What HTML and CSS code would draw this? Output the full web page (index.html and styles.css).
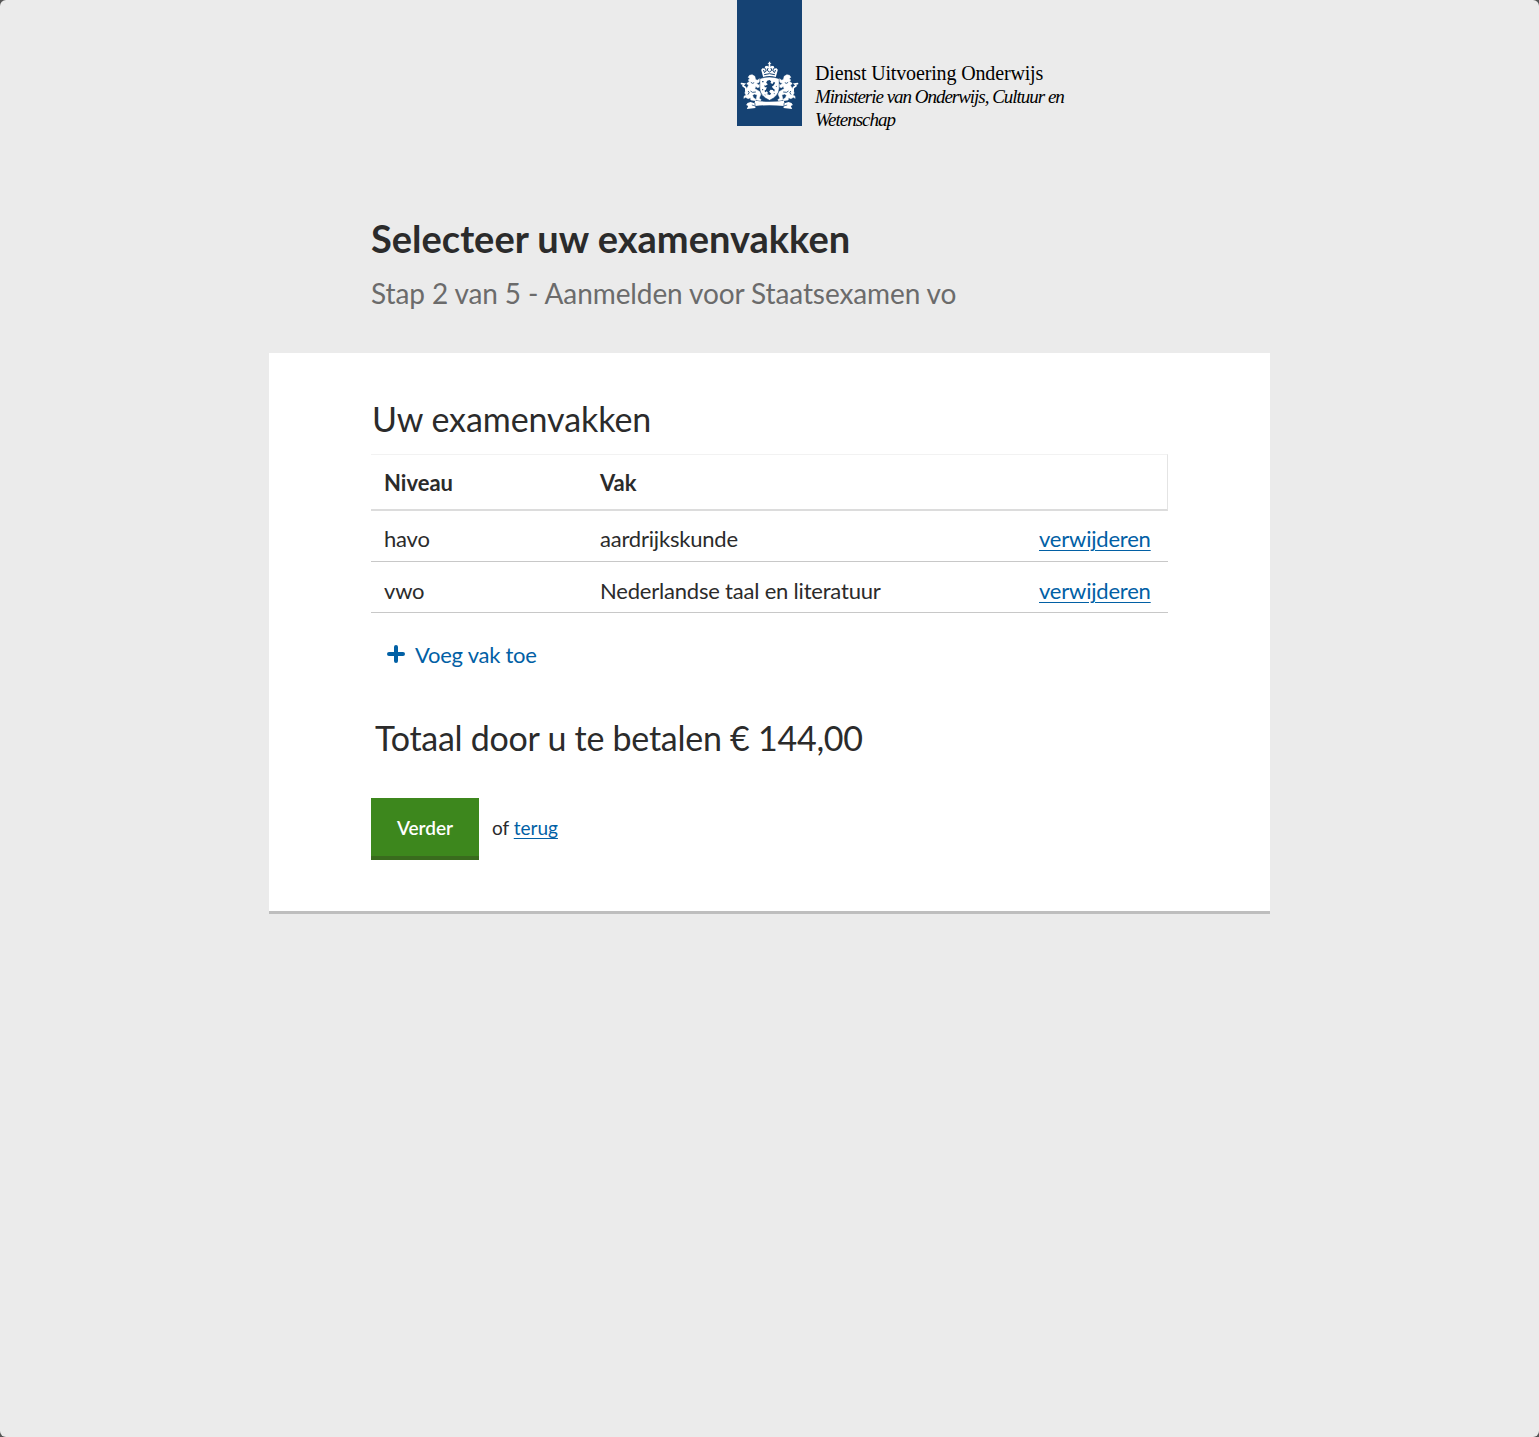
FILE: index.html
```html
<!DOCTYPE html>
<html lang="nl">
<head>
<meta charset="utf-8">
<title>Selecteer uw examenvakken</title>
<link rel="stylesheet" href="styles.css">
</head>
<body>
<div class="page">
  <header class="header">
    <svg class="emblem" viewBox="21 -150 195 378" aria-hidden="true">
      <rect x="21" y="-150" width="195" height="378" fill="#154273"/>
      <defs>
        <g id="lion">
          <path fill="#fff" stroke="#fff" stroke-width="1.5" stroke-linejoin="round" d="M57 82L61 76L69 74L77 79L79 88L84 91L91 86L94 91L88 98L82 99L88 105L92 103V111L84 113L80 109L77 116L84 120L92 125L95 133L90 145L96 149L94 152L81 150L82 143L84 135L76 132L70 136L73 143L80 148L79 152L65 150L64 143L57 146L49 142L44 145L45 138L51 136L47 129L50 121L52 116L57 108L59 102L56 98L61 94L57 90L62 86Z"/>
          <path fill="none" stroke="#154273" stroke-width="2.5" d="M65 97L70 100L75 98M57 123L60 128L56 134M64 123L70 127L80 126"/>
          <path fill="none" stroke="#fff" stroke-width="5" stroke-linecap="round" d="M50 123Q52 112 45 110T45 102L37 101M65 104L55 101"/>
        </g>
      </defs>
      <g transform="translate(-2.5 0)">
        <use href="#lion"/>
        <use href="#lion" transform="matrix(-1 0 0 1 242 0)"/>
        <path fill="#fff" stroke="#154273" stroke-width="1.5" d="M92 86Q121 76 150 86V116Q149 138 121 151Q93 138 92 116Z"/>
        <path fill="#154273" d="M114 92L121 90L126 94L124 99L130 102L134 95L138 98L134 106L128 110L133 116L137 119L135 125L131 120L124 119L120 125L126 131L122 135L112 132L117 130L113 124L108 127L106 122L110 119L113 112L107 112L105 106L109 107L116 103L111 98Z"/>
        <path fill="#154273" d="M99 93H103V97H99ZM139 109L143 107V111ZM99 117H102V121H99ZM106 132L109 134L108 137ZM133 131L137 129L136 133Z"/>
        <path fill="#fff" d="M102 81L98 67L96 59L101 54L106 57L108 49L114 47L118 50L119 43L115 41L119 39V35H123V39L127 41L123 43L124 50L128 47L134 49L136 57L141 54L146 59L144 67L140 81Q121 75 102 81Z"/>
        <path fill="none" stroke="#154273" stroke-width="3" d="M103 60L106 68L111 63L109 55M117 54L114 61L121 66L128 61L125 54M133 55L131 63L136 68L139 60M105 74Q121 68 137 74"/>
        <path fill="#fff" d="M78 152Q121 158 164 152L166 160L178 156L187 159L191 165L185 168L189 177L163 174L164 168Q121 163 78 168L79 174L53 177L57 168L51 165L55 159L64 156L76 160Z"/>
        <path fill="none" stroke="#154273" stroke-width="2" d="M77 159L78 168L68 165M165 159L164 168L174 165"/>
      </g>
    </svg>
    <p class="sender">Dienst Uitvoering Onderwijs<br><em>Ministerie van Onderwijs, Cultuur en<br>Wetenschap</em></p>
  </header>
  <div class="intro">
    <h1>Selecteer uw examenvakken</h1>
    <p class="step">Stap 2 van 5 - Aanmelden voor Staatsexamen vo</p>
  </div>
  <main class="card">
    <h2 class="subjects">Uw examenvakken</h2>
    <table>
      <thead><tr><th class="level">Niveau</th><th class="subject">Vak</th><th></th></tr></thead>
      <tbody>
        <tr><td>havo</td><td>aardrijkskunde</td><td><a href="#">verwijderen</a></td></tr>
        <tr><td>vwo</td><td>Nederlandse taal en literatuur</td><td><a href="#">verwijderen</a></td></tr>
      </tbody>
    </table>
    <a class="add" href="#">
      <svg width="18" height="18" viewBox="0 0 18 18" aria-hidden="true"><path d="M9 2V16M2 9H16" stroke-width="4" stroke-linecap="round"/></svg>
      <span>Voeg vak toe</span>
    </a>
    <h2 class="total">Totaal door u te betalen € 144,00</h2>
    <div class="actions">
      <button type="button">Verder</button>
      <span>of <a href="#">terug</a></span>
    </div>
  </main>
</div>
</body>
</html>
```
FILE: styles.css
```css
* { box-sizing: border-box; }
html { background: #555; }
body {
  margin: 0;
  color: #2b2b2b;
  font-family: Lato, "Liberation Sans", sans-serif;
  font-size: 22px;
}
h1, h2, p { margin: 0; }
a { color: #0160a5; text-decoration-thickness: 1px; text-underline-offset: 2.5px; }

.page {
  min-height: 1437px;
  background: #ebebeb;
  border-radius: 6px;
}
.header {
  display: flex;
  align-items: flex-start;
  gap: 13px;
  height: 215px;
  padding-left: 737px;
}
.emblem { width: 65px; height: 126px; flex: none; }
.sender {
  padding-top: 62px;
  color: #000;
  font: 20px/23px "Liberation Serif", serif;
  letter-spacing: -0.15px;
  white-space: nowrap;
}
.sender em { font-size: 19px; letter-spacing: -1.02px; }

.intro { padding-left: 371px; }
h1 { font-size: 38px; line-height: 46px; font-weight: 700; }
.step {
  margin-top: 15px;
  color: #6b6b6b;
  font-size: 28px;
  line-height: 34px;
  letter-spacing: -0.1px;
}

.card {
  width: 1001px;
  margin: 43px 0 0 269px;
  padding: 46px 102px 51px;
  background: #fff;
  border-bottom: 3px solid #bebebe;
}
h2 { font-size: 34px; line-height: 40px; font-weight: 400; }
.subjects { padding-left: 1px; letter-spacing: -0.07px; }

table {
  width: 797px;
  margin-top: 15px;
  table-layout: fixed;
  border-collapse: separate;
  border-spacing: 0;
  line-height: 28px;
}
th, td { text-align: left; padding-left: 13px; white-space: nowrap; }
th {
  height: 57px;
  padding-top: 2px;
  padding-bottom: 0;
  border-top: 1px solid #f2f2f2;
  border-bottom: 2px solid #dcdcdc;
}
th:last-child { border-right: 1px solid #e4e4e4; }
td {
  height: 51px;
  padding-top: 14px;
  padding-bottom: 8px;
  border-bottom: 1px solid #c8c8c8;
  letter-spacing: -0.2px;
}
tr:last-child td { padding-top: 15px; padding-bottom: 7px; }
.level { width: 216px; }
.subject { width: 439px; }

.add {
  display: flex;
  align-items: center;
  gap: 10px;
  margin: 28px 0 0 16px;
  line-height: 28px;
  letter-spacing: -0.25px;
  text-decoration: none;
}
.add svg { margin-top: -2px; }
.add path { stroke: currentColor; }
.total { margin: 49px 0 0 4px; letter-spacing: -0.26px; }

.actions {
  display: flex;
  align-items: center;
  gap: 13px;
  margin-top: 40px;
  font-size: 19px;
}
.actions span { padding-bottom: 3px; }
button {
  width: 108px;
  height: 62px;
  padding: 0;
  border: 0;
  border-bottom: 4px solid #396b1d;
  background: #3d871d;
  color: #fff;
  font: 600 19px Lato, sans-serif;
}
```
